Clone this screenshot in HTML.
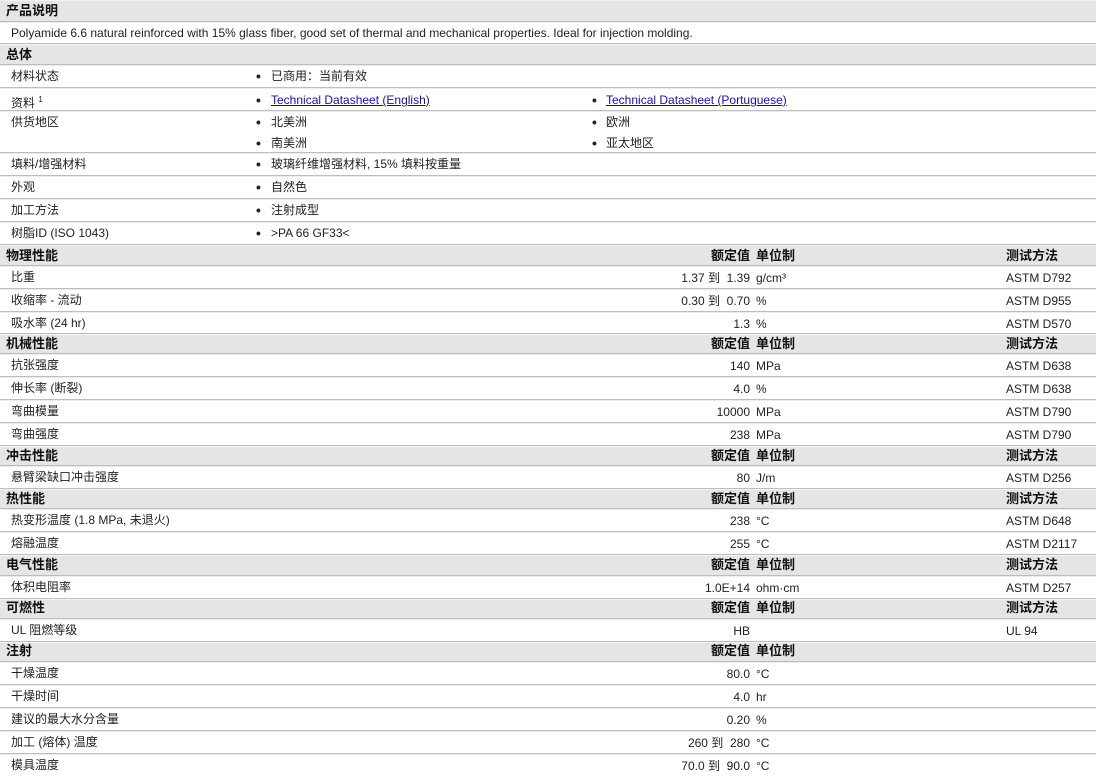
<!DOCTYPE html>
<html><head><meta charset="utf-8"><style>
body{margin:0;width:1096px;height:776px;overflow:hidden;background:#fff;font-family:"Liberation Sans","Noto Sans CJK SC",sans-serif;font-size:12px;color:#222;position:relative}
.r{position:absolute;left:0;width:1096px;border-bottom:1px solid #bdbdbd;box-shadow:0 1px 0 #ececec;box-sizing:border-box}
.r span{top:0;line-height:inherit}
.r.d span{top:1px}
.r.d span.v,.r.d span.u,.r.d span.m{top:2px}
.h{background:#e5e5e5;font-weight:bold;font-size:13px;color:#111;border-top:1px solid #f4f4f4}
.t{position:absolute;white-space:nowrap}
.v{position:absolute;right:346px;white-space:nowrap;text-align:right}
.u{position:absolute;left:756px;white-space:nowrap}
.m{position:absolute;left:1006px;white-space:nowrap}
.b{position:absolute;left:256px;font-size:14px;font-weight:bold}
.b2{position:absolute;left:592px;font-size:14px;font-weight:bold}
a{color:#1a0dab;text-decoration:underline}
</style></head><body>
<div class="r h" style="top:0;height:22px;line-height:20px"><span class="t" style="left:6px">产品说明</span></div>
<div class="r d" style="top:22px;height:22px;line-height:21px"><span class="t" style="left:11px">Polyamide 6.6 natural reinforced with 15% glass fiber, good set of thermal and mechanical properties. Ideal for injection molding.</span></div>
<div class="r h" style="top:44px;height:21px;line-height:19px"><span class="t" style="left:6px">总体</span></div>
<div class="r d" style="top:65px;height:23px;line-height:21px"><span class="t" style="left:11px">材料状态</span><span class="b">•</span><span class="t" style="left:271px">已商用：当前有效</span></div>
<div class="r d" style="top:88px;height:23px;line-height:22px"><span class="t" style="left:11px">资料 <sup style="font-size:8px">1</sup></span><span class="b">•</span><span class="t" style="left:271px"><a>Technical Datasheet (English)</a></span><span class="b2">•</span><span class="t" style="left:606px"><a>Technical Datasheet (Portuguese)</a></span></div>
<div class="r d" style="top:111px;height:42px;line-height:21px"><span class="t" style="left:11px">供货地区</span><span class="b">•</span><span class="t" style="left:271px">北美洲</span><span class="b2">•</span><span class="t" style="left:606px">欧洲</span><span class="b" style="top:22px">•</span><span class="t" style="left:271px;top:22px">南美洲</span><span class="b2" style="top:22px">•</span><span class="t" style="left:606px;top:22px">亚太地区</span></div>
<div class="r d" style="top:153px;height:23px;line-height:21px"><span class="t" style="left:11px">填料/增强材料</span><span class="b">•</span><span class="t" style="left:271px">玻璃纤维增强材料, 15% 填料按重量</span></div>
<div class="r d" style="top:176px;height:23px;line-height:21px"><span class="t" style="left:11px">外观</span><span class="b">•</span><span class="t" style="left:271px">自然色</span></div>
<div class="r d" style="top:199px;height:23px;line-height:21px"><span class="t" style="left:11px">加工方法</span><span class="b">•</span><span class="t" style="left:271px">注射成型</span></div>
<div class="r d" style="top:222px;height:23px;line-height:21px"><span class="t" style="left:11px">树脂ID (ISO 1043)</span><span class="b">•</span><span class="t" style="left:271px">&gt;PA 66 GF33&lt;</span></div>

<div class="r h" style="top:245px;height:21px;line-height:19px"><span class="t" style="left:6px">物理性能</span><span class="v">额定值</span><span class="u">单位制</span><span class="m">测试方法</span></div>
<div class="r d" style="top:266px;height:23px;line-height:21px"><span class="t" style="left:11px">比重</span><span class="v">1.37 到 &nbsp;1.39</span><span class="u">g/cm³</span><span class="m">ASTM D792</span></div>
<div class="r d" style="top:289px;height:23px;line-height:21px"><span class="t" style="left:11px">收缩率 - 流动</span><span class="v">0.30 到 &nbsp;0.70</span><span class="u">%</span><span class="m">ASTM D955</span></div>
<div class="r d" style="top:312px;height:22px;line-height:20px"><span class="t" style="left:11px">吸水率 (24 hr)</span><span class="v">1.3</span><span class="u">%</span><span class="m">ASTM D570</span></div>

<div class="r h" style="top:334px;height:20px;line-height:17px"><span class="t" style="left:6px">机械性能</span><span class="v">额定值</span><span class="u">单位制</span><span class="m">测试方法</span></div>
<div class="r d" style="top:354px;height:23px;line-height:21px"><span class="t" style="left:11px">抗张强度</span><span class="v">140</span><span class="u">MPa</span><span class="m">ASTM D638</span></div>
<div class="r d" style="top:377px;height:23px;line-height:21px"><span class="t" style="left:11px">伸长率 (断裂)</span><span class="v">4.0</span><span class="u">%</span><span class="m">ASTM D638</span></div>
<div class="r d" style="top:400px;height:23px;line-height:21px"><span class="t" style="left:11px">弯曲模量</span><span class="v">10000</span><span class="u">MPa</span><span class="m">ASTM D790</span></div>
<div class="r d" style="top:423px;height:23px;line-height:21px"><span class="t" style="left:11px">弯曲强度</span><span class="v">238</span><span class="u">MPa</span><span class="m">ASTM D790</span></div>

<div class="r h" style="top:446px;height:20px;line-height:17px"><span class="t" style="left:6px">冲击性能</span><span class="v">额定值</span><span class="u">单位制</span><span class="m">测试方法</span></div>
<div class="r d" style="top:466px;height:23px;line-height:21px"><span class="t" style="left:11px">悬臂梁缺口冲击强度</span><span class="v">80</span><span class="u">J/m</span><span class="m">ASTM D256</span></div>

<div class="r h" style="top:489px;height:20px;line-height:17px"><span class="t" style="left:6px">热性能</span><span class="v">额定值</span><span class="u">单位制</span><span class="m">测试方法</span></div>
<div class="r d" style="top:509px;height:23px;line-height:21px"><span class="t" style="left:11px">热变形温度 (1.8 MPa, 未退火)</span><span class="v">238</span><span class="u">°C</span><span class="m">ASTM D648</span></div>
<div class="r d" style="top:532px;height:23px;line-height:21px"><span class="t" style="left:11px">熔融温度</span><span class="v">255</span><span class="u">°C</span><span class="m">ASTM D2117</span></div>

<div class="r h" style="top:555px;height:21px;line-height:17px"><span class="t" style="left:6px">电气性能</span><span class="v">额定值</span><span class="u">单位制</span><span class="m">测试方法</span></div>
<div class="r d" style="top:576px;height:23px;line-height:21px"><span class="t" style="left:11px">体积电阻率</span><span class="v">1.0E+14</span><span class="u">ohm·cm</span><span class="m">ASTM D257</span></div>

<div class="r h" style="top:599px;height:20px;line-height:16px"><span class="t" style="left:6px">可燃性</span><span class="v">额定值</span><span class="u">单位制</span><span class="m">测试方法</span></div>
<div class="r d" style="top:619px;height:23px;line-height:21px"><span class="t" style="left:11px">UL 阻燃等级</span><span class="v">HB</span><span class="m">UL 94</span></div>

<div class="r h" style="top:642px;height:20px;line-height:16px"><span class="t" style="left:6px">注射</span><span class="v">额定值</span><span class="u">单位制</span></div>
<div class="r d" style="top:662px;height:23px;line-height:21px"><span class="t" style="left:11px">干燥温度</span><span class="v">80.0</span><span class="u">°C</span></div>
<div class="r d" style="top:685px;height:23px;line-height:21px"><span class="t" style="left:11px">干燥时间</span><span class="v">4.0</span><span class="u">hr</span></div>
<div class="r d" style="top:708px;height:23px;line-height:21px"><span class="t" style="left:11px">建议的最大水分含量</span><span class="v">0.20</span><span class="u">%</span></div>
<div class="r d" style="top:731px;height:23px;line-height:21px"><span class="t" style="left:11px">加工 (熔体) 温度</span><span class="v">260 到 &nbsp;280</span><span class="u">°C</span></div>
<div class="r d" style="top:754px;height:23px;line-height:21px;border-bottom:none;box-shadow:none"><span class="t" style="left:11px">模具温度</span><span class="v">70.0 到 &nbsp;90.0</span><span class="u">°C</span></div>
</body></html>
